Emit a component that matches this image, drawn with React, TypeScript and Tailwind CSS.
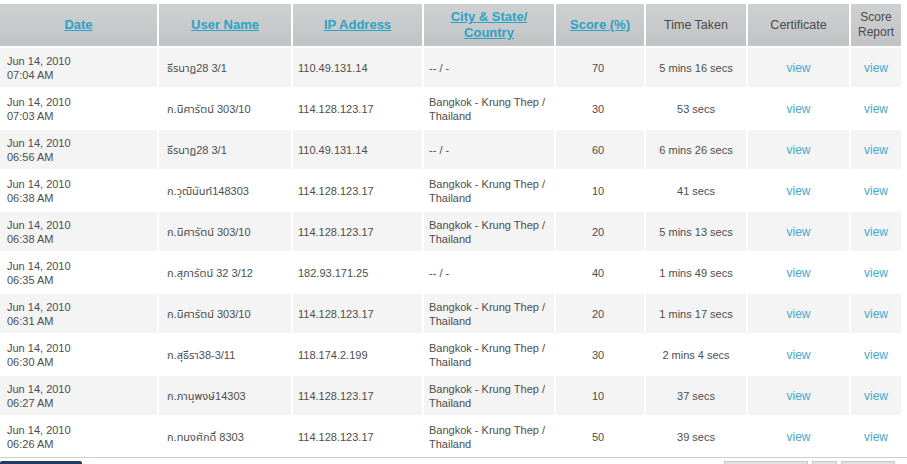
import React from 'react';

interface Attempt {
  date: string;
  time: string;
  user: string;
  ip: string;
  city: string;
  country: string;
  score: number;
  taken: string;
}

const attempts: Attempt[] = [
  { date: 'Jun 14, 2010', time: '07:04 AM', user: 'ธีรนาฏ28 3/1', ip: '110.49.131.14', city: '-- / -', country: '', score: 70, taken: '5 mins 16 secs' },
  { date: 'Jun 14, 2010', time: '07:03 AM', user: 'ก.นิศารัตน์ 303/10', ip: '114.128.123.17', city: 'Bangkok - Krung Thep /', country: 'Thailand', score: 30, taken: '53 secs' },
  { date: 'Jun 14, 2010', time: '06:56 AM', user: 'ธีรนาฏ28 3/1', ip: '110.49.131.14', city: '-- / -', country: '', score: 60, taken: '6 mins 26 secs' },
  { date: 'Jun 14, 2010', time: '06:38 AM', user: 'ก.วุฒินันท์148303', ip: '114.128.123.17', city: 'Bangkok - Krung Thep /', country: 'Thailand', score: 10, taken: '41 secs' },
  { date: 'Jun 14, 2010', time: '06:38 AM', user: 'ก.นิศารัตน์ 303/10', ip: '114.128.123.17', city: 'Bangkok - Krung Thep /', country: 'Thailand', score: 20, taken: '5 mins 13 secs' },
  { date: 'Jun 14, 2010', time: '06:35 AM', user: 'ก.สุภารัตน์ 32 3/12', ip: '182.93.171.25', city: '-- / -', country: '', score: 40, taken: '1 mins 49 secs' },
  { date: 'Jun 14, 2010', time: '06:31 AM', user: 'ก.นิศารัตน์ 303/10', ip: '114.128.123.17', city: 'Bangkok - Krung Thep /', country: 'Thailand', score: 20, taken: '1 mins 17 secs' },
  { date: 'Jun 14, 2010', time: '06:30 AM', user: 'ก.สุธีรา38-3/11', ip: '118.174.2.199', city: 'Bangkok - Krung Thep /', country: 'Thailand', score: 30, taken: '2 mins 4 secs' },
  { date: 'Jun 14, 2010', time: '06:27 AM', user: 'ก.ภานุพงษ์14303', ip: '114.128.123.17', city: 'Bangkok - Krung Thep /', country: 'Thailand', score: 10, taken: '37 secs' },
  { date: 'Jun 14, 2010', time: '06:26 AM', user: 'ก.ทนงศักดิ์ 8303', ip: '114.128.123.17', city: 'Bangkok - Krung Thep /', country: 'Thailand', score: 50, taken: '39 secs' },
];

const cols = 'grid grid-cols-[157px_132px_129px_130px_88px_100px_101px_50px] gap-x-[2px]';
const headCell = 'bg-gradient-to-b from-[#cfd0d2] to-[#c2c3c5] flex items-center justify-center text-center';

const SortLink = ({ children }: { children: React.ReactNode }) => (
  <a href="#" className="text-[13px] font-bold text-[#2ba3c6] underline leading-[16px]">
    {children}
  </a>
);

const App: React.FC = () => {
  return (
    <div
      className="w-[907px] h-[464px] overflow-hidden bg-white text-[#4d4d4d] text-[11px]"
      style={{ fontFamily: '"Liberation Sans", Arial, "Noto Sans Thai", "Noto Sans", sans-serif' }}
    >
      <div className="w-[901px] pt-[4px] flex flex-col gap-y-[2px]">
        {/* header */}
        <div className={`${cols} h-[42px]`}>
          {['Date', 'User Name', 'IP Address'].map((h) => (
            <div key={h} className={headCell}>
              <SortLink>{h}</SortLink>
            </div>
          ))}
          <div className={headCell}>
            <SortLink>
              City &amp; State/
              <br />
              Country
            </SortLink>
          </div>
          <div className={headCell}>
            <SortLink>Score (%)</SortLink>
          </div>
          <div className={`${headCell} text-[#4a4a4a] text-[12.5px]`}>Time Taken</div>
          <div className={`${headCell} text-[#4a4a4a] text-[12.5px]`}>Certificate</div>
          <div className={`${headCell} text-[#4a4a4a] text-[12px] leading-[15px]`}>
            Score
            <br />
            Report
          </div>
        </div>

        {/* rows */}
        {attempts.map((a, i) => {
          const bg = i % 2 === 0 ? 'bg-[#f4f4f4]' : 'bg-white';
          return (
            <div key={i} className={`${cols} h-[39px] leading-[14px]`}>
              <div className={`${bg} flex flex-col justify-center pl-[7px]`}>
                <span>{a.date}</span>
                <span>{a.time}</span>
              </div>
              <div className={`${bg} flex items-center pl-[8px] whitespace-nowrap`}>{a.user}</div>
              <div className={`${bg} flex items-center pl-[5px]`}>{a.ip}</div>
              <div className={`${bg} flex flex-col justify-center pl-[5px] whitespace-nowrap`}>
                <span>{a.city}</span>
                {a.country && <span>{a.country}</span>}
              </div>
              <div className={`${bg} flex items-center justify-center pr-[4px]`}>{a.score}</div>
              <div className={`${bg} flex items-center justify-center`}>{a.taken}</div>
              <div className={`${bg} flex items-center justify-center`}>
                <a href="#" className="text-[#45a9cc] text-[12px]">view</a>
              </div>
              <div className={`${bg} flex items-center justify-center`}>
                <a href="#" className="text-[#45a9cc] text-[12px]">view</a>
              </div>
            </div>
          );
        })}
      </div>

      {/* footer strip */}
      <div className="mt-[1px] border-t border-[#cfcfcf] pt-[3px] flex">
        <div className="w-[82px] h-[6px] bg-[#1f3d63] rounded-t-[2px]" />
        <div className="flex-1" />
        <div className="flex gap-[4px] mr-[12px]">
          <div className="w-[84px] h-[6px] bg-[#e2e2e2] border border-[#c9c9c9]" />
          <div className="w-[25px] h-[6px] bg-[#e2e2e2] border border-[#c9c9c9]" />
          <div className="w-[54px] h-[6px] bg-[#e2e2e2] border border-[#c9c9c9]" />
        </div>
      </div>
    </div>
  );
};

export default App;
